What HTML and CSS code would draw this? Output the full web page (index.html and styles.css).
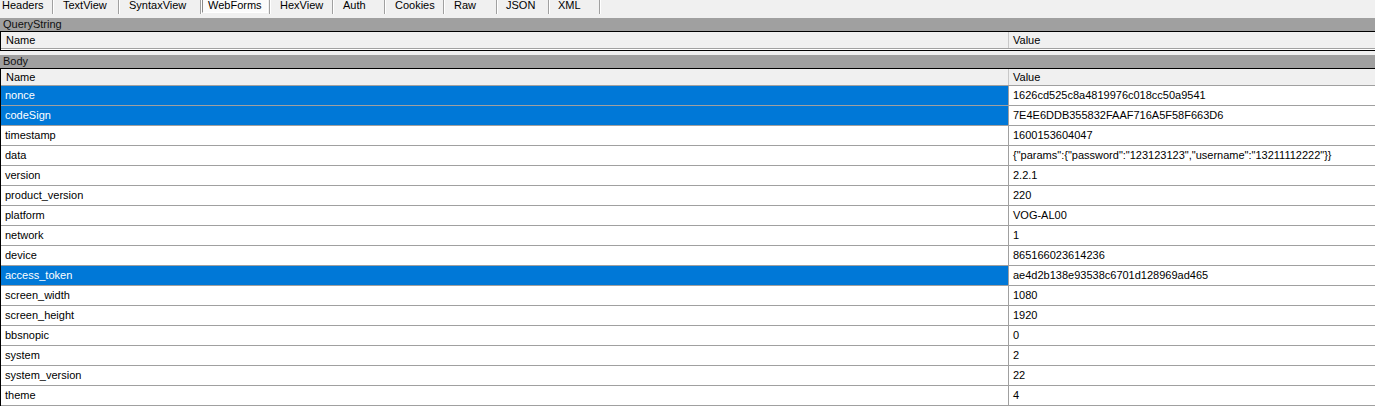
FILE: index.html
```html
<!DOCTYPE html>
<html>
<head>
<meta charset="utf-8">
<link rel="stylesheet" href="styles.css">
</head>
<body>
<div class="tabs">
  <div class="tab tab-headers">Headers</div>
  <div class="tab tab-textview">TextView</div>
  <div class="tab tab-syntaxview">SyntaxView</div>
  <div class="tab tab-webforms"><span class="tab-box">WebForms</span></div>
  <div class="tab tab-hexview">HexView</div>
  <div class="tab tab-auth">Auth</div>
  <div class="tab tab-cookies">Cookies</div>
  <div class="tab tab-raw">Raw</div>
  <div class="tab tab-json">JSON</div>
  <div class="tab tab-xml">XML</div>
</div>

<section class="group">
  <div class="group-title">QueryString</div>
  <div class="list list-empty">
    <div class="row head"><div class="cell name">Name</div><div class="cell value">Value</div></div>
  </div>
</section>

<section class="group group-body">
  <div class="group-title">Body</div>
  <div class="list">
    <div class="row head"><div class="cell name">Name</div><div class="cell value">Value</div></div>
    <div class="row selected"><div class="cell name">nonce</div><div class="cell value">1626cd525c8a4819976c018cc50a9541</div></div>
    <div class="row selected"><div class="cell name">codeSign</div><div class="cell value">7E4E6DDB355832FAAF716A5F58F663D6</div></div>
    <div class="row"><div class="cell name">timestamp</div><div class="cell value">1600153604047</div></div>
    <div class="row"><div class="cell name">data</div><div class="cell value">{"params":{"password":"123123123","username":"13211112222"}}</div></div>
    <div class="row"><div class="cell name">version</div><div class="cell value">2.2.1</div></div>
    <div class="row"><div class="cell name">product_version</div><div class="cell value">220</div></div>
    <div class="row"><div class="cell name">platform</div><div class="cell value">VOG-AL00</div></div>
    <div class="row"><div class="cell name">network</div><div class="cell value">1</div></div>
    <div class="row"><div class="cell name">device</div><div class="cell value">865166023614236</div></div>
    <div class="row selected"><div class="cell name">access_token</div><div class="cell value">ae4d2b138e93538c6701d128969ad465</div></div>
    <div class="row"><div class="cell name">screen_width</div><div class="cell value">1080</div></div>
    <div class="row"><div class="cell name">screen_height</div><div class="cell value">1920</div></div>
    <div class="row"><div class="cell name">bbsnopic</div><div class="cell value">0</div></div>
    <div class="row"><div class="cell name">system</div><div class="cell value">2</div></div>
    <div class="row"><div class="cell name">system_version</div><div class="cell value">22</div></div>
    <div class="row"><div class="cell name">theme</div><div class="cell value">4</div></div>
  </div>
</section>
</body>
</html>
```
FILE: styles.css
```css
html, body {
  margin: 0;
  padding: 0;
  background: #f0f0f0;
}
body {
  font-family: "Liberation Sans", Arial, sans-serif;
  font-size: 11px;
  color: #000;
  width: 1375px;
  height: 406px;
  overflow: hidden;
}

/* ---------- tab strip ---------- */
.tabs {
  display: flex;
  height: 18px;
  background: #f0f0f0;
}
.tab {
  box-sizing: border-box;
  flex: none;
  height: 14px;
  padding: 0 0 0 10px;
  line-height: 11px;
  border-right: 1px solid #a0a0a0;
  box-shadow: 1px 0 0 #ffffff;
  white-space: nowrap;
  overflow: hidden;
}
.tab-headers    { width: 53px; padding-left: 2px; }
.tab-textview   { width: 66px; }
.tab-syntaxview { width: 82px; }
.tab-webforms   { width: 69px; padding-left: 1px; }
.tab-hexview    { width: 63px; }
.tab-auth       { width: 52px; }
.tab-cookies    { width: 59px; }
.tab-raw        { width: 53px; }
.tab-json       { width: 52px; padding-left: 9px; }
.tab-xml        { width: 51px; padding-left: 9px; }

.tab-box {
  display: inline-block;
  box-sizing: border-box;
  width: 66px;
  height: 13px;
  padding: 0 0 0 5px;
  background: #fbfbfb;
  border-left: 1px solid #8a8a8a;
  border-right: 1px solid #ffffff;
  border-bottom: 1px solid #ffffff;
}

/* ---------- groups ---------- */
.group-body {
  margin-top: 4px;
}
.group-title {
  height: 13px;
  line-height: 12px;
  padding-left: 3px;
  background: #a0a0a0;
  color: #111;
}
.list {
  border-top: 1px solid #000;
  border-left: 1px solid #000;
}
.list-empty {
  border-bottom: 1px solid #000;
  padding-bottom: 1px;
  background: #ffffff;
}

/* ---------- rows ---------- */
.row {
  display: grid;
  grid-template-columns: 1008px 1fr;
  height: 19px;
  border-bottom: 1px solid #a0a0a0;
  background: #ffffff;
}
.cell {
  line-height: 19px;
  white-space: nowrap;
  overflow: hidden;
}
.name {
  padding-left: 4px;
  border-right: 1px solid #a0a0a0;
}
.value {
  padding-left: 4px;
}
.row.head {
  height: 16px;
  background: #f0f0f0;
}
.row.head .cell {
  line-height: 16px;
}
.row.head .name {
  padding-left: 5px;
  border-right: 1px solid #c8c8c8;
}
.row.head .value {
  padding-left: 4px;
}
.row.selected .name {
  background: #0078d7;
  color: #ffffff;
}
```
